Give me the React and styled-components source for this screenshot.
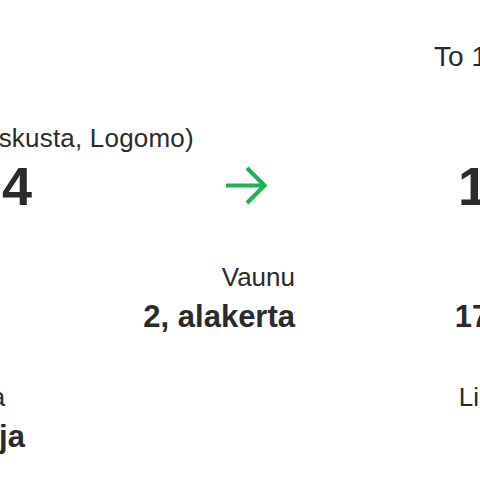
import React from "react";
import styled, { createGlobalStyle } from "styled-components";

const GlobalStyle = createGlobalStyle`
  html, body {
    margin: 0;
    padding: 0;
    background: #ffffff;
    overflow: hidden;
  }
  body {
    font-family: "Liberation Sans", Arial, sans-serif;
    color: #2b2b2b;
  }
`;

const Ticket = styled.div`
  box-sizing: border-box;
  width: 702px;
  height: 480px;
  margin-left: -106px;
  padding-top: 41px;
`;

const DateLine = styled.div`
  text-align: right;
  font-size: 28px;
  line-height: 32px;
  white-space: nowrap;
`;

const Journey = styled.div`
  display: grid;
  grid-template-columns: 1fr auto 1fr;
  align-items: center;
  row-gap: 3px;
  margin-top: 50px;
`;

const Station = styled.div`
  grid-column: ${(p) => p.$col};
  font-size: 26px;
  line-height: 30px;
  letter-spacing: 0.2px;
  text-indent: ${(p) => (p.$end ? 0 : -6)}px;
  white-space: nowrap;
  text-align: ${(p) => (p.$end ? "right" : "left")};
`;

const Time = styled.div`
  grid-column: ${(p) => p.$col};
  font-size: 54px;
  font-weight: 700;
  line-height: 60px;
  white-space: nowrap;
  text-align: ${(p) => (p.$end ? "right" : "left")};
`;

const ArrowCell = styled.div`
  grid-column: 2;
  display: flex;
  justify-content: center;
  color: #1fb255;
`;

const Details = styled.div`
  display: grid;
  grid-template-columns: 190px 211px 1fr;
  row-gap: 47px;
  margin-top: 46px;
`;

const Field = styled.div`
  display: flex;
  flex-direction: column;
  align-items: ${(p) => (p.$end ? "flex-end" : "flex-start")};
  white-space: nowrap;
`;

const FieldLabel = styled.div`
  font-size: 26px;
  line-height: 30px;
`;

const FieldValue = styled.div`
  margin-top: 7px;
  font-size: 31px;
  font-weight: 700;
  line-height: 36px;
`;

function Arrow() {
  return (
    <svg width="44" height="40" viewBox="0 0 44 40" fill="none">
      <path
        d="M3 19.5H41M24 2L41.5 19.5L24 37"
        stroke="currentColor"
        strokeWidth="4.2"
        strokeLinejoin="miter"
      />
    </svg>
  );
}

const fields = [
  { label: "Juna", value: "IC 981" },
  { label: "Vaunu", value: "2, alakerta", end: true },
  { label: "Paikka", value: "17 ikkuna", end: true },
  { label: "Kategoria", value: "Omistaja" },
  null,
  { label: "Lisäpalvelut", value: "Ei", end: true },
];

export default function App() {
  return (
    <>
      <GlobalStyle />
      <Ticket>
        <DateLine>To 16.5.2024</DateLine>
        <Journey>
          <Station $col={1}>(Turku keskusta, Logomo)</Station>
          <Station $col={3} $end>
            Helsinki
          </Station>
          <Time $col={1}>14:24</Time>
          <ArrowCell>
            <Arrow />
          </ArrowCell>
          <Time $col={3} $end>
            16:05
          </Time>
        </Journey>
        <Details>
          {fields.map((f, i) =>
            f ? (
              <Field key={i} $end={f.end}>
                <FieldLabel>{f.label}</FieldLabel>
                <FieldValue>{f.value}</FieldValue>
              </Field>
            ) : (
              <div key={i} />
            )
          )}
        </Details>
      </Ticket>
    </>
  );
}
